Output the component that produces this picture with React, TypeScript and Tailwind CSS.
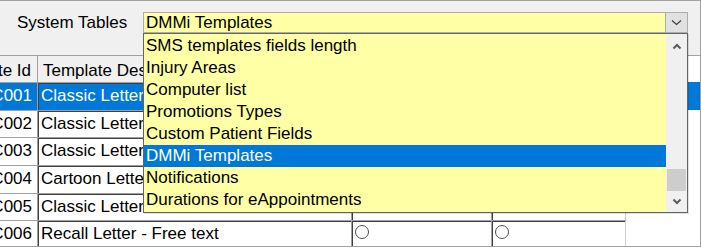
import React from "react";

type Row = { id: string; desc: string; sel?: boolean; h: string };

const rows: Row[] = [
  { id: "C001", desc: "Classic Letter - Recall", sel: true, h: "h-[28px]" },
  { id: "C002", desc: "Classic Letter - Reminder", h: "h-[27px]" },
  { id: "C003", desc: "Classic Letter - Overdue", h: "h-[28px]" },
  { id: "C004", desc: "Cartoon Letter - Recall", h: "h-[28px]" },
  { id: "C005", desc: "Classic Letter - Welcome", h: "h-[27px]" },
  { id: "C006", desc: "Recall Letter - Free text", h: "h-[28px]" },
];

const items = [
  "SMS templates fields length",
  "Injury Areas",
  "Computer list",
  "Promotions Types",
  "Custom Patient Fields",
  "DMMi Templates",
  "Notifications",
  "Durations for eAppointments",
];

function Radio() {
  return <div className="ml-[2px] mt-[3px] w-[14px] h-[14px] rounded-full border border-[#505050] bg-white" />;
}

function ChevronDownThin() {
  return (
    <svg width="11" height="7" viewBox="0 0 11 7">
      <polyline points="1,1.5 5.5,5.5 10,1.5" fill="none" stroke="#404040" strokeWidth="1.2" />
    </svg>
  );
}

function ChevronBold({ up }: { up?: boolean }) {
  return (
    <svg width="10" height="7" viewBox="0 0 10 7">
      <polyline
        points={up ? "1.5,5.5 5,2 8.5,5.5" : "1.5,1.5 5,5 8.5,1.5"}
        fill="none"
        stroke="#5a5a5a"
        strokeWidth="2"
      />
    </svg>
  );
}

export default function App() {
  return (
    <div className="w-[701px] h-[248px] bg-white font-['Liberation_Sans',Arial,sans-serif] text-[17px] text-black">
      <div className="w-[701px] h-[247px] bg-[#f0f0f0] border-t border-r border-b border-[#a0a0a0] flex flex-col overflow-hidden">
        {/* Top bar */}
        <div className="h-[54px] shrink-0 flex items-start pt-[11px] pl-[17px]">
          <div className="w-[126px] leading-[21px] whitespace-nowrap">System Tables</div>
          <div className="relative z-10 w-[545px]">
            <div className="h-[21px] flex bg-[#ffffa6] border border-[#adadad]">
              <div className="flex-1 pl-[2px] leading-[19px] whitespace-nowrap">DMMi Templates</div>
              <div className="w-[22px] h-full bg-[#e1e1e1] border-l border-[#adadad] flex items-center justify-center">
                <ChevronDownThin />
              </div>
            </div>
            {/* Dropdown list */}
            <div className="absolute left-0 top-[21px] w-[545px] border border-[#646464] flex bg-[#ffffa6] shadow-[1px_1px_0_rgba(0,0,0,0.12)]">
              <div className="flex-1 pt-[1px] pb-[1px]">
                {items.map((t) => (
                  <div
                    key={t}
                    className={
                      t === "DMMi Templates"
                        ? "h-[22px] leading-[22px] pl-[2px] whitespace-nowrap bg-[#0078d7] text-white"
                        : "h-[22px] leading-[22px] pl-[2px] whitespace-nowrap"
                    }
                  >
                    {t}
                  </div>
                ))}
              </div>
              <div className="w-[21px] bg-[#f0f0f0] flex flex-col">
                <div className="h-[24px] flex items-center justify-center">
                  <ChevronBold up />
                </div>
                <div className="flex-1 flex flex-col justify-end">
                  <div className="h-[22px] mx-[1px] bg-[#cdcdcd]" />
                </div>
                <div className="h-[21px] flex items-center justify-center">
                  <ChevronBold />
                </div>
              </div>
            </div>
          </div>
        </div>

        {/* Grid */}
        <div className="flex-1 bg-white border-t border-[#a0a0a0] overflow-hidden">
          {/* Header */}
          <div className="h-[26px] flex">
            <div className="w-[38px] shrink-0 bg-[#f0f0f0] border-r border-[#a0a0a0] overflow-hidden flex justify-end pr-[6px] pt-[4px] leading-[22px] whitespace-nowrap">
              Template Id
            </div>
            <div className="w-[314px] shrink-0 bg-[#f0f0f0] border-r border-[#a0a0a0] overflow-hidden pl-[5px] pt-[4px] leading-[22px] whitespace-nowrap">
              Template Description
            </div>
            <div className="w-[140px] shrink-0 bg-[#f0f0f0] border-r border-[#a0a0a0] pl-[5px] pt-[4px] leading-[22px] whitespace-nowrap overflow-hidden">
              Default
            </div>
            <div className="w-[134px] shrink-0 bg-[#f0f0f0] border-r border-[#d0d0d0] pl-[5px] pt-[4px] leading-[22px] whitespace-nowrap overflow-hidden">
              Active
            </div>
          </div>
          {/* Rows */}
          {rows.map((r) => (
            <div
              key={r.id}
              className={
                r.sel
                  ? `${r.h} flex bg-[#0078d7] text-white`
                  : `${r.h} flex`
              }
            >
              <div className="w-[38px] shrink-0 border-t border-r border-[#a0a0a0] overflow-hidden flex justify-end pr-[5px] pt-[1px] leading-[24px] whitespace-nowrap">
                {r.id}
              </div>
              <div className="w-[314px] shrink-0 border-t border-[#a0a0a0] border-r">
                <div className="h-full border-t border-l border-[#404040] pl-[2px] leading-[24px] whitespace-nowrap overflow-hidden">
                  {r.desc}
                </div>
              </div>
              <div className="w-[140px] shrink-0 border-t border-[#a0a0a0] border-r">
                <div className="h-full border-t border-l border-[#404040]">
                  <Radio />
                </div>
              </div>
              <div className="w-[134px] shrink-0 border-t border-[#a0a0a0] border-r border-r-[#d0d0d0]">
                <div className="h-full border-t border-l border-[#404040]">
                  <Radio />
                </div>
              </div>
            </div>
          ))}
        </div>
      </div>
    </div>
  );
}
